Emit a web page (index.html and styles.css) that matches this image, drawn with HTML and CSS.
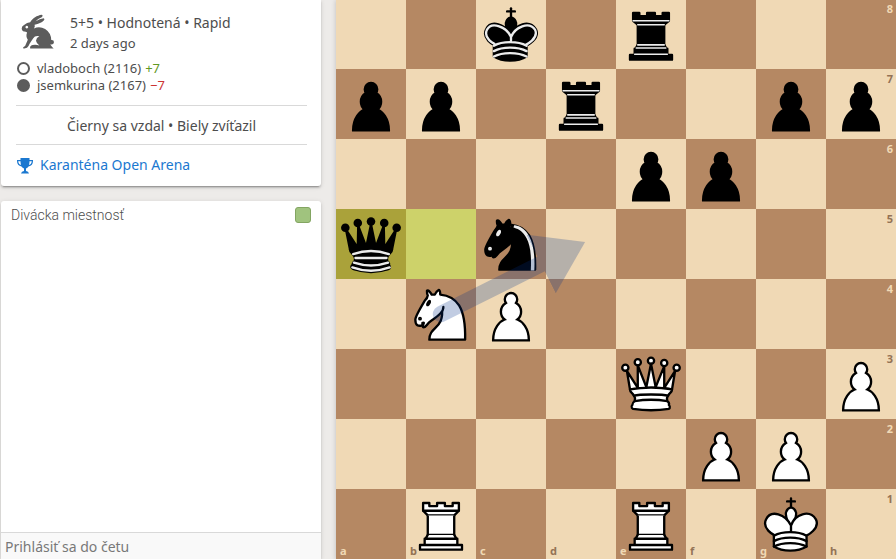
FILE: index.html
```
<!DOCTYPE html>
<html lang="sk">
<head>
    <meta charset="UTF-8">
    <meta name="viewport" content="width=device-width, initial-scale=1.0">
    <title>vladoboch - jsemkurina</title>
    <link rel="stylesheet" href="styles.css">
</head>
<body>
    <svg class="defs" aria-hidden="true">
        <symbol id="P" viewBox="0 0 45 45">
            <path d="M22.5 9c-2.21 0-4 1.79-4 4 0 .89.29 1.71.78 2.38C17.33 16.5 16 18.59 16 21c0 2.03.94 3.84 2.41 5.03-3 1.06-7.41 5.55-7.41 13.47h23c0-7.92-4.41-12.41-7.41-13.47 1.47-1.19 2.41-3 2.41-5.03 0-2.41-1.33-4.5-3.28-5.62.49-.67.78-1.49.78-2.38 0-2.21-1.79-4-4-4z" fill="#fff" stroke="#000" stroke-width="1.5" stroke-linecap="round"/>
        </symbol>
        <symbol id="p" viewBox="0 0 45 45">
            <path d="M22.5 9c-2.21 0-4 1.79-4 4 0 .89.29 1.71.78 2.38C17.33 16.5 16 18.59 16 21c0 2.03.94 3.84 2.41 5.03-3 1.06-7.41 5.55-7.41 13.47h23c0-7.92-4.41-12.41-7.41-13.47 1.47-1.19 2.41-3 2.41-5.03 0-2.41-1.33-4.5-3.28-5.62.49-.67.78-1.49.78-2.38 0-2.21-1.79-4-4-4z" stroke="#000" stroke-width="1.5" stroke-linecap="round"/>
        </symbol>
        <symbol id="N" viewBox="0 0 45 45">
            <g fill="none" stroke="#000" stroke-width="1.5" stroke-linecap="round" stroke-linejoin="round">
                <path d="M22 10c10.5 1 16.5 8 16 29H15c0-9 10-6.5 8-21" fill="#fff"/>
                <path d="M24 18c.38 2.91-5.55 7.37-8 9-3 2-2.82 4.34-5 4-1.042-.94 1.41-3.04 0-3-1 0 .19 1.23-1 2-1 0-4.003 1-4-4 0-2 6-12 6-12s1.89-1.9 2-3.5c-.73-.994-.5-2-.5-3 1-1 3 2.5 3 2.5h2s.78-1.992 2.5-3c1 0 1 3 1 3" fill="#fff"/>
                <path d="M9.5 25.5a.5.5 0 1 1-1 0 .5.5 0 1 1 1 0zm5.433-9.75a.5 1.5 30 1 1-.866-.5.5 1.5 30 1 1 .866.5z" fill="#000"/>
            </g>
        </symbol>
        <symbol id="n" viewBox="0 0 45 45">
            <g fill="none" stroke="#000" stroke-width="1.5" stroke-linecap="round" stroke-linejoin="round">
                <path d="M22 10c10.5 1 16.5 8 16 29H15c0-9 10-6.5 8-21" fill="#000"/>
                <path d="M24 18c.38 2.91-5.55 7.37-8 9-3 2-2.82 4.34-5 4-1.042-.94 1.41-3.04 0-3-1 0 .19 1.23-1 2-1 0-4.003 1-4-4 0-2 6-12 6-12s1.89-1.9 2-3.5c-.73-.994-.5-2-.5-3 1-1 3 2.5 3 2.5h2s.78-1.992 2.5-3c1 0 1 3 1 3" fill="#000"/>
                <path d="M9.5 25.5a.5.5 0 1 1-1 0 .5.5 0 1 1 1 0zm5.433-9.75a.5 1.5 30 1 1-.866-.5.5 1.5 30 1 1 .866.5z" fill="#ececec" stroke="#ececec"/>
                <path d="M24.55 10.4l-.45 1.45.5.15c3.15 1 5.65 2.49 7.9 6.75S35.75 29.06 35.25 39l-.05.5h2.25l.05-.5c.5-10.06-.88-16.85-3.25-21.34-2.37-4.49-5.79-6.64-9.19-7.16l-.51-.1z" fill="#ececec" stroke="none"/>
            </g>
        </symbol>
        <symbol id="R" viewBox="0 0 45 45">
            <g fill="#fff" stroke="#000" stroke-width="1.5" stroke-linecap="round" stroke-linejoin="round">
                <path d="M9 39h27v-3H9v3zM12 36v-4h21v4H12zM11 14V9h4v2h5V9h5v2h5V9h4v5" stroke-linecap="butt"/>
                <path d="M34 14l-3 3H14l-3-3"/>
                <path d="M31 17v12.5H14V17" stroke-linecap="butt" stroke-linejoin="miter"/>
                <path d="M31 29.5l1.5 2.5h-20l1.5-2.5"/>
                <path d="M11 14h23" fill="none" stroke-linejoin="miter"/>
            </g>
        </symbol>
        <symbol id="r" viewBox="0 0 45 45">
            <g stroke="#000" stroke-width="1.5" stroke-linecap="round" stroke-linejoin="round">
                <path d="M9 39h27v-3H9v3zM12.5 32l1.5-2.5h17l1.5 2.5h-20zM12 36v-4h21v4H12z" stroke-linecap="butt"/>
                <path d="M14 29.5v-13h17v13H14z" stroke-linecap="butt" stroke-linejoin="miter"/>
                <path d="M14 16.5L11 14h23l-3 2.5H14zM11 14V9h4v2h5V9h5v2h5V9h4v5H11z" stroke-linecap="butt"/>
                <path d="M12 35.5h21M13 31.5h19M14 29.5h17M14 16.5h17M11 14h23" fill="none" stroke="#ececec" stroke-width="1" stroke-linejoin="miter"/>
            </g>
        </symbol>
        <symbol id="Q" viewBox="0 0 45 45">
            <g fill="#fff" stroke="#000" stroke-width="1.5" stroke-linecap="round" stroke-linejoin="round">
                <path d="M8 12a2 2 0 1 1-4 0 2 2 0 1 1 4 0zM24.500 7.500a2 2 0 1 1-4 0 2 2 0 1 1 4 0zM41 12a2 2 0 1 1-4 0 2 2 0 1 1 4 0zM16 8.500a2 2 0 1 1-4 0 2 2 0 1 1 4 0zM33 9a2 2 0 1 1-4 0 2 2 0 1 1 4 0z"/>
                <path d="M9 26c8.500-1.500 21-1.500 27 0l2-12-7 11V11l-5.500 13.500-3-15-3 15-5.500-14V25L7 14l2 12z" stroke-linecap="butt"/>
                <path d="M9 26c0 2 1.500 2 2.500 4 1 1.500 1 1 .5 3.500-1.500 1-1.500 2.500-1.500 2.500-1.500 1.500.5 2.500.5 2.500 6.500 1 16.500 1 23 0 0 0 1.500-1 0-2.500 0 0 .5-1.500-1-2.500-.5-2.500-.5-2 .5-3.500 1-2 2.500-2 2.500-4-8.500-1.500-18.500-1.500-27 0z" stroke-linecap="butt"/>
                <path d="M11.500 30c3.500-1 18.500-1 22 0M12 33.500c6-1 15-1 21 0" fill="none"/>
            </g>
        </symbol>
        <symbol id="q" viewBox="0 0 45 45">
            <g stroke="#000" stroke-width="1.5" stroke-linecap="round" stroke-linejoin="round">
                <g stroke="none">
                    <circle cx="6" cy="12" r="2.75"/>
                    <circle cx="14" cy="9" r="2.75"/>
                    <circle cx="22.5" cy="8" r="2.75"/>
                    <circle cx="31" cy="9" r="2.75"/>
                    <circle cx="39" cy="12" r="2.75"/>
                </g>
                <path d="M9 26c8.500-1.500 21-1.500 27 0l2.500-12.500L31 25l-.3-14.100-5.200 13.600-3-14.500-3 14.500-5.200-13.600L14 25 6.500 13.500 9 26z" stroke-linecap="butt"/>
                <path d="M9 26c0 2 1.500 2 2.500 4 1 1.500 1 1 .5 3.500-1.500 1-1.500 2.500-1.500 2.500-1.500 1.500.5 2.500.5 2.500 6.500 1 16.500 1 23 0 0 0 1.500-1 0-2.500 0 0 .5-1.500-1-2.500-.5-2.500-.5-2 .5-3.500 1-2 2.500-2 2.500-4-8.500-1.500-18.500-1.500-27 0z" stroke-linecap="butt"/>
                <path d="M11 38.500a35 35 1 0 0 23 0" fill="none" stroke-linecap="butt"/>
                <path d="M11 29a35 35 1 0 1 23 0M12.500 31.500h20M11.500 34.500a35 35 1 0 0 22 0M10.500 37.500a35 35 1 0 0 24 0" fill="none" stroke="#ececec"/>
            </g>
        </symbol>
        <symbol id="K" viewBox="0 0 45 45">
            <g fill="none" stroke="#000" stroke-width="1.5" stroke-linecap="round" stroke-linejoin="round">
                <path d="M22.500 11.630V6M20 8h5" stroke-linejoin="miter"/>
                <path d="M22.500 25s4.500-7.500 3-10.500c0 0-1-2.500-3-2.500s-3 2.500-3 2.500c-1.500 3 3 10.500 3 10.500" fill="#fff" stroke-linecap="butt" stroke-linejoin="miter"/>
                <path d="M11.500 37c5.500 3.500 15.500 3.500 21 0v-7s9-4.500 6-10.500c-4-6.500-13.500-3.500-16 4V27v-3.500c-3.500-7.500-13-10.500-16-4-3 6 5 10 5 10V37z" fill="#fff"/>
                <path d="M11.500 30c5.500-3 15.500-3 21 0M11.500 33.500c5.500-3 15.500-3 21 0M11.500 37c5.500-3 15.500-3 21 0"/>
            </g>
        </symbol>
        <symbol id="k" viewBox="0 0 45 45">
            <g fill="none" stroke="#000" stroke-width="1.5" stroke-linecap="round" stroke-linejoin="round">
                <path d="M22.500 11.630V6" stroke-linejoin="miter"/>
                <path d="M22.500 25s4.500-7.500 3-10.500c0 0-1-2.500-3-2.500s-3 2.500-3 2.500c-1.500 3 3 10.500 3 10.500" fill="#000" stroke-linecap="butt" stroke-linejoin="miter"/>
                <path d="M11.500 37c5.500 3.500 15.500 3.500 21 0v-7s9-4.500 6-10.500c-4-6.500-13.500-3.500-16 4V27v-3.500c-3.500-7.500-13-10.500-16-4-3 6 5 10 5 10V37z" fill="#000"/>
                <path d="M20 8h5" stroke-linejoin="miter"/>
                <path d="M32 29.500s8.500-4 6.030-9.650C34.150 14 25 18 22.500 24.500v2.100-2.100C20 18 9.906 14 6.997 19.850c-2.497 5.650 4.853 9 4.853 9M11.500 30c5.500-3 15.500-3 21 0m-21 3.500c5.500-3 15.500-3 21 0m-21 3.500c5.500-3 15.500-3 21 0" stroke="#ececec"/>
            </g>
        </symbol>
    </svg>

    <div class="round">
        <aside class="side">
            <section class="card meta">
                <div class="infos">
                    <svg class="rabbit" viewBox="60 42 103 105" aria-hidden="true">
                        <path fill="#5c5c5c" fill-rule="evenodd" d="M65 84Q65 76 73 73Q80 67 90 66C97 54 110 46 124 44Q129 46 125 50Q112 55 106 63Q118 55 130 54Q134 57 130 61Q121 70 103 73Q105 79 101 84Q118 76 134 86Q151 97 152 118Q160 117 160 125Q159 133 149 131Q154 138 159 143H90Q88 136 97 133Q106 131 117 134Q109 129 107 120Q108 111 117 107Q104 104 99 113L92 123Q88 128 85 136Q82 144 70 143Q67 140 75 136L83 117Q76 107 81 96Q78 93 69 92Q65 89 65 84zM80 76a4 4 0 1 0 .1 0z"/>
                    </svg>
                    <div>
                        <div class="setup">5+5 • Hodnotená • Rapid</div>
                        <div class="time">2 days ago</div>
                    </div>
                </div>
                <div class="player white">vladoboch (2116) <span class="good">+7</span></div>
                <div class="player black">jsemkurina (2167) <span class="bad">−7</span></div>
                <div class="status">Čierny sa vzdal • Biely zvíťazil</div>
                <a class="tour" href="#">
                    <svg class="trophy" viewBox="0 0 16 16" aria-hidden="true">
                        <path fill="currentColor" fill-rule="evenodd" d="M3.500 0h9v2H16v1c0 3-1.500 5-4.500 5.500Q10.500 10 9 10.500v2.500q2.500.3 3 2.500H4q.5-2.200 3-2.500v-2.500Q5.500 10 4.500 8.500C1.500 8 0 6 0 3V2h3.500zM1.200 3.200c.2 2 1.200 3.300 2.800 3.900q-.5-1.500-.5-3.900zm11.300 0q0 2.400-.5 3.900c1.600-.6 2.600-1.900 2.800-3.900z"/>
                    </svg>
                    Karanténa Open Arena
                </a>
            </section>

            <section class="card chat">
                <div class="chat-head">
                    <label for="chatToggle">Divácka miestnosť</label>
                    <input type="checkbox" id="chatToggle" class="toggle" checked>
                </div>
                <div class="messages"></div>
                <input type="text" class="say" placeholder="Prihlásiť sa do četu" aria-label="Prihlásiť sa do četu" disabled>
            </section>
        </aside>

        <main class="board">
            <div class="squares" id="squares"></div>
            <svg class="shapes" viewBox="0 0 512 512" aria-hidden="true">
                <defs>
                    <marker id="arrowhead" orient="auto" markerWidth="4" markerHeight="8" refX="2.05" refY="2">
                        <path d="M0,0 V4 L3,2 Z" fill="#003088"/>
                    </marker>
                </defs>
                <g opacity="0.24">
                    <line x1="96" y1="288" x2="215" y2="228.500" stroke="#003088" stroke-width="15" stroke-linecap="round" marker-end="url(#arrowhead)"/>
                </g>
            </svg>
        </main>
    </div>

    <script>
        const fen = '2k1r3/pp1r2pp/4pp2/q1n5/1NP5/4Q2P/5PP1/1R2R1K1';
        const lastMove = ['a5', 'b5'];
        const files = 'abcdefgh';
        const squares = document.getElementById('squares');

        fen.split('/').forEach((row, y) => {
            const cells = row.replace(/\d/g, n => '.'.repeat(n));

            [...cells].forEach((piece, x) => {
                const rank = 8 - y;
                const square = document.createElement('div');
                square.className = 'square ' + ((x + y) % 2 ? 'dark' : 'light');
                if (lastMove.includes(files[x] + rank)) square.classList.add('last-move');

                let html = '';
                if (piece !== '.') html += `<svg class="piece"><use href="#${piece}"/></svg>`;
                if (x === 7) html += `<span class="coord rank">${rank}</span>`;
                if (rank === 1) html += `<span class="coord file">${files[x]}</span>`;
                square.innerHTML = html;
                squares.appendChild(square);
            });
        });
    </script>
</body>
</html>
```
FILE: styles.css
```
*,
*::before {
    margin: 0;
    padding: 0;
    box-sizing: border-box;
}

body {
    font-family: 'Noto Sans', sans-serif;
    font-size: 14px;
    line-height: 20px;
    color: #4d4d4d;
    background: #edebe9;
    overflow: hidden;
}

.defs {
    position: absolute;
    width: 0;
    height: 0;
}

.round {
    display: grid;
    grid-template-columns: 4fr 7fr;
    grid-template-rows: minmax(0, 1fr);
    column-gap: 15px;
    height: 100vh;
    padding-left: 1px;
}

.side {
    display: flex;
    flex-direction: column;
    gap: 15px;
    min-width: 0;
}

.card {
    background: #fff;
    box-shadow: 0 2px 2px 0 rgba(0, 0, 0, 0.14), 0 3px 1px -2px rgba(0, 0, 0, 0.2), 0 1px 5px 0 rgba(0, 0, 0, 0.12);
}

/* game info */

.meta {
    padding: 13px 14px 11px 15px;
    border-radius: 0 0 3px 3px;
}

.infos {
    display: flex;
    gap: 15px;
    margin-bottom: 7px;
}

.rabbit {
    width: 35px;
    height: 36px;
    margin: 1px 0 0 4px;
}

.time,
.player {
    font-size: 13px;
}

.player {
    display: flex;
    align-items: center;
    gap: 4px;
    line-height: 17px;
}

.player::before {
    content: '';
    width: 13px;
    height: 13px;
    margin: 0 3px 0 1px;
    border: 2px solid #5c5c5c;
    border-radius: 50%;
}

.black::before {
    background: #5c5c5c;
}

.good {
    color: #629924;
}

.bad {
    color: #c33;
}

.status {
    margin: 11px 0 10px;
    padding: 10px 0 8px;
    border-top: 1px solid #d9d9d9;
    border-bottom: 1px solid #d9d9d9;
    text-align: center;
}

.tour {
    display: flex;
    align-items: center;
    gap: 7px;
    color: #1b78d0;
    text-decoration: none;
}

.trophy {
    width: 16px;
    height: 16px;
    margin: 2px 0 0 1px;
}

/* chat */

.chat {
    display: flex;
    flex-direction: column;
    flex: 1;
    border-radius: 3px 3px 0 0;
}

.chat-head {
    display: flex;
    justify-content: space-between;
    align-items: center;
    padding: 4px 10px;
    font-family: Roboto, sans-serif;
    font-weight: 300;
}

.toggle {
    appearance: none;
    width: 16px;
    height: 16px;
    border: 1px solid #83a562;
    border-radius: 3px;
    background: #a0c37e;
    cursor: pointer;
}

.messages {
    flex: 1;
}

.say {
    width: 100%;
    height: 27px;
    padding: 0 4px;
    border: none;
    border-top: 1px solid #d9d9d9;
    background: #f9f9f9;
    font: inherit;
}

.say::placeholder {
    color: #787878;
}

/* board */

.board {
    display: grid;
    align-self: end;
    box-shadow: 0 1px 5px rgba(0, 0, 0, 0.2);
}

.squares,
.shapes {
    grid-area: 1 / 1;
    width: 100%;
    aspect-ratio: 1;
}

.squares {
    display: grid;
    grid-template: repeat(8, minmax(0, 1fr)) / repeat(8, minmax(0, 1fr));
}

.shapes {
    z-index: 1;
    pointer-events: none;
}

.square {
    position: relative;
}

.light {
    background: #f0d9b5;
    color: #947355;
}

.dark {
    background: #b58863;
    color: #f0d9b5;
}

.light.last-move {
    background: #cdd26a;
}

.dark.last-move {
    background: #aaa23a;
}

.piece {
    display: block;
    width: 100%;
    height: 100%;
}

.coord {
    position: absolute;
    font-size: 11px;
    font-weight: 700;
    line-height: 16px;
}

.rank {
    top: 2px;
    right: 3px;
}

.file {
    bottom: 0;
    left: 4px;
}
```
